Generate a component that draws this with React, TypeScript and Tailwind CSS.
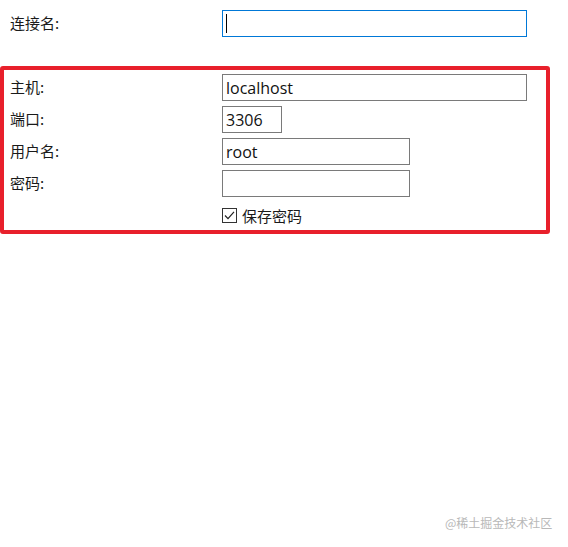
export default function App() {
  const font = "font-['Segoe_UI','Open_Sans','Noto_Sans_CJK_SC',sans-serif]"
  const cjk = "font-['Noto_Sans_CJK_SC',sans-serif]"

  const Field = ({ label, value, width }: { label: string; value: string; width: string }) => (
    <div className="flex items-center h-[27px]">
      <span className={`w-[212px] text-[15px] text-[#1a1a1a] ${cjk}`}>{label}</span>
      <div className={`${width} h-[27px] border border-[#7a7a7a] bg-white flex items-center px-[3px] text-[16px] text-[#111] ${font}`}>{value}</div>
    </div>
  )

  return (
    <div className="w-[568px] h-[547px] bg-white relative overflow-hidden">
      <div className="pt-[10px] pl-[10px] flex items-center">
        <span className={`w-[212px] text-[15px] text-[#1a1a1a] ${cjk}`}>连接名:</span>
        <div className="w-[305px] h-[27px] border border-[#0078d7] flex items-center pl-[3px]">
          <div className="w-px h-[19px] bg-black" />
        </div>
      </div>

      <div className="mt-[29px] w-[550px] h-[168px] border-4 border-[#e8202b] rounded-[3px] pt-[4px] pl-[6px] flex flex-col gap-[5px]">
        <Field label="主机:" value="localhost" width="w-[305px]" />
        <Field label="端口:" value="3306" width="w-[60px]" />
        <Field label="用户名:" value="root" width="w-[188px]" />
        <Field label="密码:" value="" width="w-[188px]" />
        <div className="flex items-center h-[15px] mt-[6px]">
          <span className="w-[212px]" />
          <div className="w-[15px] h-[15px] border border-[#333] flex items-center justify-center">
            <svg width="13" height="13" viewBox="0 0 13 13">
              <path d="M2 6.5 L5 9.6 L11 2.8" fill="none" stroke="#222" strokeWidth="1.2" />
            </svg>
          </div>
          <span className={`ml-[5px] text-[15px] leading-[15px] text-[#1a1a1a] ${cjk}`}>保存密码</span>
        </div>
      </div>

      <div className={`absolute left-[445px] top-[514px] text-[12px] text-[#b8b8b8] ${cjk}`}>@稀土掘金技术社区</div>
    </div>
  )
}
